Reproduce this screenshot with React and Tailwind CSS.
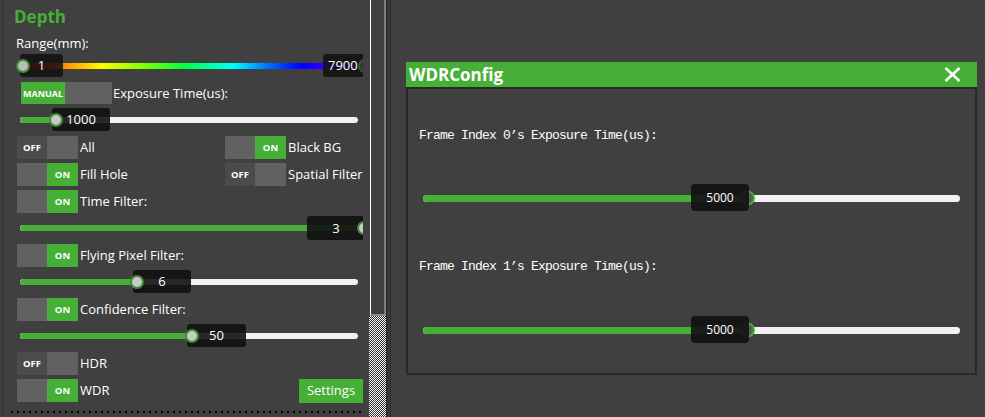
import React from 'react';

const O = 3; // left content origin

function Toggle({ on }) {
  return (
    <div className="flex w-[61px] h-[23px] shrink-0">
      {on ? (
        <>
          <div className="w-[30px] bg-[#616161]" />
          <div className="flex-1 bg-[#45b035] flex items-center justify-center text-[9.5px] font-bold leading-none">ON</div>
        </>
      ) : (
        <>
          <div className="w-[30px] bg-[#4b4b4b] flex items-center justify-center text-[9.5px] font-bold leading-none">OFF</div>
          <div className="flex-1 bg-[#616161]" />
        </>
      )}
    </div>
  );
}

function ToggleRow({ on, label, mt }) {
  return (
    <div className={`flex items-center h-[23px] pl-[14px] ${mt}`}>
      <Toggle on={on} />
      <span className="ml-[2px] text-[13px] leading-none whitespace-nowrap">{label}</span>
    </div>
  );
}

function Slider({ mt, h = 'h-[23px]', fill, handle, boxL, boxW, text, trackW = 338 }) {
  return (
    <div className={`relative flex items-center ${h} ${mt}`}>
      <div className="ml-[17px] h-[6px] rounded-full bg-[#f2f2f2] overflow-hidden" style={{ width: trackW }}>
        <div className="h-full bg-[#45b035] rounded-full" style={{ width: fill - 20 }} />
      </div>
      <div
        className="absolute top-0 bottom-0 bg-[#111111]/90 rounded-[3px] flex items-center justify-center text-[13px] leading-none"
        style={{ left: boxL - O, width: boxW }}
      >
        {text}
      </div>
      <div
        className="absolute top-1/2 -translate-y-1/2 w-[14px] h-[14px] rounded-full border-2 border-[#3b8f31] bg-[#c9c9c9]"
        style={{ left: handle - 7 - O }}
      />
    </div>
  );
}

function DialogSlider({ mt }) {
  return (
    <div className={`relative flex items-center h-[28px] ${mt}`}>
      <div className="ml-[4px] w-[537px] h-[7px] rounded-full bg-[#f2f2f2] overflow-hidden">
        <div className="h-full w-[324px] bg-[#45b035] rounded-full" />
      </div>
      <div className="absolute top-1/2 -translate-y-1/2 left-[321px] w-[15px] h-[15px] rounded-full border-2 border-[#45b035] bg-[#5a5a5a]" />
      <div className="absolute top-0 bottom-[1px] left-[272px] w-[58px] bg-[#111111]/90 rounded-[4px] flex items-center justify-center text-[12px] leading-none">
        5000
      </div>
    </div>
  );
}

export default function App() {
  return (
    <div className="w-[985px] h-[417px] bg-[#404040] flex overflow-hidden text-white font-['Open_Sans','Noto_Sans',sans-serif]">
      {/* Left panel */}
      <div className="w-[369px] h-full flex shrink-0">
        <div className="w-[2px]" />
        <div className="w-px bg-[#343434]" />
        <div className="w-[360px] overflow-hidden flex flex-col">
          <div className="h-[32px] flex items-center pl-[11px] text-[17px] font-bold text-[#45b035] leading-none">Depth</div>
          <div className="h-[22px] flex items-center pl-[13px] text-[13px] leading-none">Range(mm):</div>
          {/* Range slider */}
          <div className="relative flex items-center h-[23px]">
            <div className="ml-[17px] w-[345px] h-[6px] bg-[linear-gradient(to_right,#e00000_0%,#ff2a00_6%,#ff9900_14%,#ffff00_24%,#80ff00_36%,#00ff40_48%,#00ffff_62%,#0040ff_76%,#0000ff_82%,#8000ff_100%)]" />
            <div className="absolute top-0 bottom-0 left-[17px] w-[43px] bg-[#111111]/85 rounded-[3px] flex items-center justify-center text-[13px] leading-none">1</div>
            <div className="absolute top-0 bottom-0 left-[320px] w-[48px] bg-[#111111]/85 rounded-[3px] flex items-center pl-[5px] text-[13px] leading-none">7900</div>
            <div className="absolute top-1/2 -translate-y-1/2 left-[13px] w-[14px] h-[14px] rounded-full border-2 border-[#3b8f31] bg-[#bdbdbd]" />
            <div className="absolute top-1/2 -translate-y-1/2 left-[355px] w-[14px] h-[14px] rounded-full border-2 border-[#2e5f2a] bg-[#333]" />
          </div>
          {/* Manual row */}
          <div className="flex items-center h-[22px] mt-[5px] pl-[18px]">
            <div className="flex w-[91px] h-[22px] shrink-0">
              <div className="w-[44px] bg-[#45b035] flex items-center justify-center text-[9px] font-bold leading-none">MANUAL</div>
              <div className="flex-1 bg-[#616161]" />
            </div>
            <span className="ml-[1px] text-[13px] leading-none whitespace-nowrap">Exposure Time(us):</span>
          </div>
          <Slider mt="mt-[4px]" fill={56} handle={56} boxL={52} boxW={58} text="1000" />
          {/* Two-column rows */}
          <div className="flex items-center h-[23px] mt-[5px] pl-[14px]">
            <div className="flex items-center w-[208px]">
              <Toggle on={false} />
              <span className="ml-[2px] text-[13px] leading-none">All</span>
            </div>
            <Toggle on={true} />
            <span className="ml-[2px] text-[13px] leading-none whitespace-nowrap">Black BG</span>
          </div>
          <div className="flex items-center h-[23px] mt-[4px] pl-[14px]">
            <div className="flex items-center w-[208px]">
              <Toggle on={true} />
              <span className="ml-[2px] text-[13px] leading-none">Fill Hole</span>
            </div>
            <Toggle on={false} />
            <span className="ml-[2px] text-[13px] leading-none whitespace-nowrap">Spatial Filter</span>
          </div>
          <ToggleRow on label="Time Filter:" mt="mt-[4px]" />
          <Slider mt="mt-[3px]" h="h-[24px]" fill={362} handle={364} boxL={307} boxW={58} text="3" trackW={343} />
          <ToggleRow on label="Flying Pixel Filter:" mt="mt-[4px]" />
          <Slider mt="mt-[3px]" fill={137} handle={137} boxL={133} boxW={58} text="6" />
          <ToggleRow on label="Confidence Filter:" mt="mt-[5px]" />
          <Slider mt="mt-[3px]" fill={192} handle={192} boxL={187} boxW={59} text="50" />
          <ToggleRow on={false} label="HDR" mt="mt-[5px]" />
          <div className="flex items-center h-[23px] mt-[4px] pl-[14px]">
            <Toggle on />
            <span className="ml-[2px] text-[13px] leading-none">WDR</span>
            <div className="ml-auto w-[64px] h-[24px] bg-[#45b035] flex items-center justify-center text-[13px] leading-none">Settings</div>
          </div>
          <div className="mt-[9px] ml-[8px] h-[2px] bg-[repeating-linear-gradient(to_right,#000000_0px,#000000_2px,transparent_2px,transparent_6px)]" />
        </div>
        <div className="w-[6px]" />
      </div>

      {/* Scrollbar */}
      <div className="w-[17px] h-full flex flex-col shrink-0">
        <div className="h-[316px] border-l border-l-white border-r-2 border-r-[#7d7d7d] border-b-2 border-b-[#8a8a8a] ml-px" />
        <div className="flex-1 bg-[repeating-conic-gradient(#ffffff_0%_25%,#2e2e2e_0%_50%)] bg-[length:2px_2px]" />
      </div>

      {/* Separator lines */}
      <div className="w-[5px] h-full flex shrink-0">
        <div className="w-[2px] bg-[#303030]" />
        <div className="w-[2px] bg-[#3b3b3b]" />
        <div className="w-px bg-[#2e2e2e]" />
      </div>

      {/* Right area */}
      <div className="flex-1 pl-[15px] pt-[62px]">
        <div className="w-[571px] flex flex-col">
          <div className="h-[25px] bg-[#45b035] flex items-center justify-between pl-[3px] pr-[16px]">
            <span className="text-[17px] font-bold leading-none">WDRConfig</span>
            <svg width="17" height="15" viewBox="0 0 17 15">
              <path d="M1.5 1 L15.5 14 M15.5 1 L1.5 14" stroke="#ffffff" strokeWidth="2.6" />
            </svg>
          </div>
          <div className="h-[288px] border-2 border-[#282828] pl-[11px] flex flex-col">
            <div className="mt-[38px] h-[16px] flex items-center text-[13px] tracking-[-0.8px] leading-none font-['Liberation_Mono',monospace] whitespace-nowrap">
              Frame Index 0’s Exposure Time(us):
            </div>
            <DialogSlider mt="mt-[41px]" />
            <div className="mt-[46px] h-[16px] flex items-center text-[13px] tracking-[-0.8px] leading-none font-['Liberation_Mono',monospace] whitespace-nowrap">
              Frame Index 1’s Exposure Time(us):
            </div>
            <DialogSlider mt="mt-[42px]" />
          </div>
        </div>
      </div>
    </div>
  );
}
